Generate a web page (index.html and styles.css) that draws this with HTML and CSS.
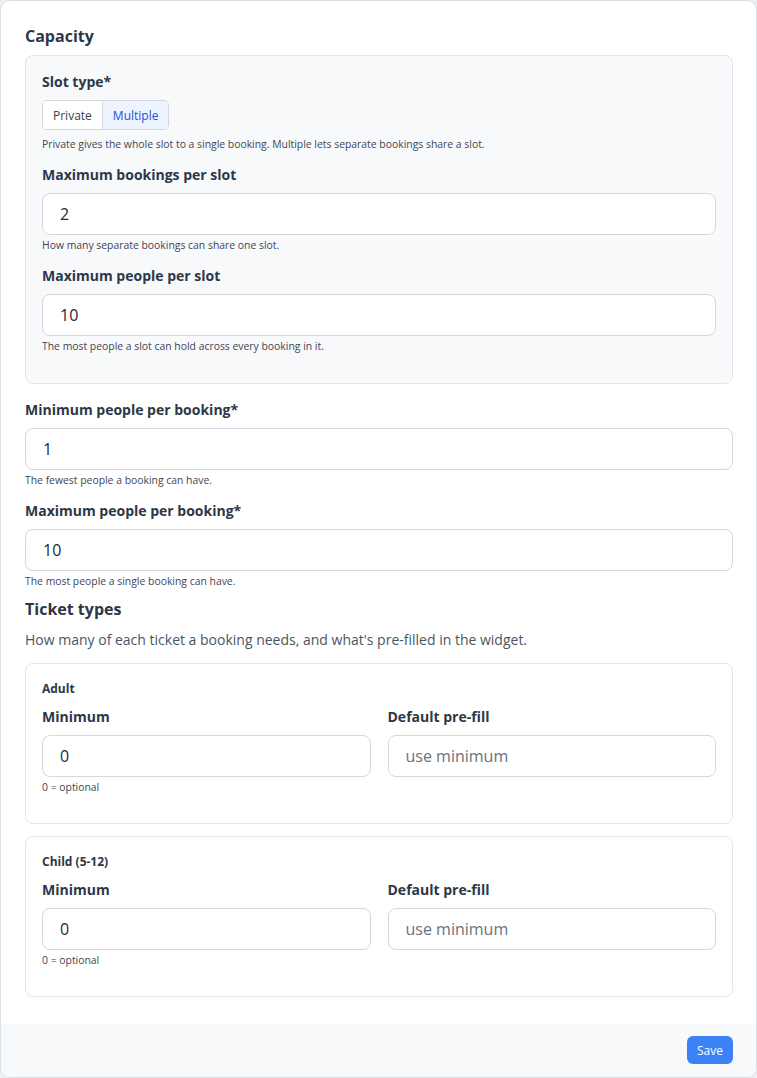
FILE: index.html
```html
<!DOCTYPE html>
<html lang="en">
<head>
  <meta charset="UTF-8">
  <meta name="viewport" content="width=device-width, initial-scale=1.0">
  <title>Capacity</title>
  <link rel="stylesheet" href="styles.css">
</head>
<body>
  <div class="card">
    <div class="card-body">
      <h2>Capacity</h2>
      <div class="subbox">
        <div class="field">
          <label>Slot type*</label>
          <div class="segmented">
            <button class="seg">Private</button>
            <button class="seg active">Multiple</button>
          </div>
          <p class="help">Private gives the whole slot to a single booking. Multiple lets separate bookings share a slot.</p>
        </div>
        <div class="field">
          <label>Maximum bookings per slot</label>
          <input type="text" value="2">
          <p class="help">How many separate bookings can share one slot.</p>
        </div>
        <div class="field">
          <label>Maximum people per slot</label>
          <input type="text" value="10">
          <p class="help">The most people a slot can hold across every booking in it.</p>
        </div>
      </div>

      <div class="field">
        <label>Minimum people per booking*</label>
        <input type="text" value="1">
        <p class="help">The fewest people a booking can have.</p>
      </div>
      <div class="field">
        <label>Maximum people per booking*</label>
        <input type="text" value="10">
        <p class="help">The most people a single booking can have.</p>
      </div>

      <h2 class="ticket-heading">Ticket types</h2>
      <p class="desc">How many of each ticket a booking needs, and what's pre-filled in the widget.</p>

      <div class="ticket">
        <div class="ticket-name">Adult</div>
        <div class="row">
          <div class="field">
            <label>Minimum</label>
            <input type="text" value="0">
            <p class="help">0 = optional</p>
          </div>
          <div class="field">
            <label>Default pre-fill</label>
            <input type="text" placeholder="use minimum">
          </div>
        </div>
      </div>

      <div class="ticket">
        <div class="ticket-name">Child (5-12)</div>
        <div class="row">
          <div class="field">
            <label>Minimum</label>
            <input type="text" value="0">
            <p class="help">0 = optional</p>
          </div>
          <div class="field">
            <label>Default pre-fill</label>
            <input type="text" placeholder="use minimum">
          </div>
        </div>
      </div>
    </div>
    <div class="card-footer">
      <button class="save">Save</button>
    </div>
  </div>
</body>
</html>
```

FILE: styles.css
```css
* {
  box-sizing: border-box;
}
body {
  margin: 0;
  background: #eceef1;
  font-family: 'Open Sans', sans-serif;
  color: #2d3748;
}
.card {
  width: 757px;
  height: 1078px;
  background: #fff;
  border: 1px solid #dcdfe4;
  border-radius: 10px;
  overflow: hidden;
  display: flex;
  flex-direction: column;
}
.card-body {
  flex: 1;
  padding: 24px 23px 0 24px;
}
h2 {
  font-size: 16px;
  font-weight: 700;
  line-height: 22px;
  margin: 0 0 8px;
}
.ticket-heading {
  margin-top: -4px;
}
.subbox {
  background: #f8f9fb;
  border: 1px solid #e2e5ea;
  border-radius: 8px;
  padding: 16px;
  margin-bottom: 16px;
}
.field {
  margin-bottom: 14px;
}
label {
  display: block;
  font-size: 14px;
  font-weight: 700;
  line-height: 20px;
  margin-bottom: 8px;
}
input {
  display: block;
  width: 100%;
  height: 42px;
  padding: 0 17px;
  font-family: inherit;
  font-size: 16px;
  color: #1f2937;
  background: #fff;
  border: 1px solid #d4d7de;
  border-radius: 8px;
}
input::placeholder {
  color: #6b7280;
}
.help {
  margin: 3px 0 0;
  font-size: 10.4px;
  line-height: 14px;
  color: #3f4654;
}
.segmented {
  display: inline-flex;
  border: 1px solid #d4d7de;
  border-radius: 5px;
  overflow: hidden;
  margin-bottom: 4px;
}
.seg {
  font-family: inherit;
  font-size: 12px;
  height: 28px;
  padding: 0 10px;
  border: none;
  background: #fff;
  color: #374151;
}
.seg + .seg {
  border-left: 1px solid #d4d7de;
}
.seg.active {
  background: #eef4ff;
  color: #1d4ed8;
}
.desc {
  font-size: 14px;
  line-height: 20px;
  color: #4b5563;
  margin: 10px 0 13px;
}
.ticket {
  border: 1px solid #e2e5ea;
  border-radius: 8px;
  padding: 16px 16px 15px;
  margin-bottom: 12px;
}
.ticket-name {
  font-size: 12px;
  font-weight: 700;
  line-height: 18px;
  margin-bottom: 9px;
}
.row {
  display: grid;
  grid-template-columns: 1fr 1fr;
  gap: 17px;
}
.card-footer {
  height: 53px;
  background: #f8f9fb;
  display: flex;
  justify-content: flex-end;
  align-items: flex-start;
  padding: 12px 23px 0;
}
.save {
  font-family: inherit;
  font-size: 12px;
  height: 28px;
  padding: 0 10px;
  border: none;
  border-radius: 6px;
  background: #3b82f6;
  color: #fff;
}
```
